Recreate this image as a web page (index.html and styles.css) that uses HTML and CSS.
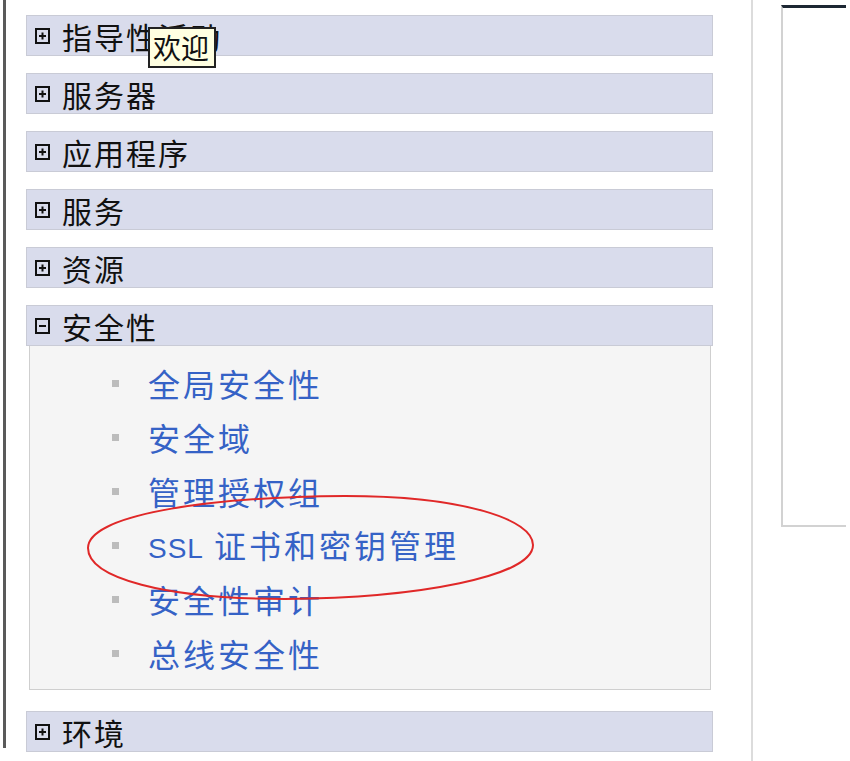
FILE: index.html
```html
<!DOCTYPE html>
<html lang="zh">
<head>
<meta charset="utf-8">
<title>导航</title>
<link rel="stylesheet" href="styles.css">
</head>
<body>
<div class="page">
  <div class="frame-edge"></div>
  <nav class="nav">
    <div class="group">
      <div class="head">
        <svg class="tog" viewBox="0 0 15 16" width="15" height="16"><rect x="1" y="1" width="13" height="14" fill="none" stroke="#111" stroke-width="2"/><path d="M4 8h7M7.5 4.5v7" stroke="#111" stroke-width="2"/></svg>
        <span class="label">指导性活动</span>
        <span class="tooltip">欢迎</span>
      </div>
    </div>
    <div class="group">
      <div class="head">
        <svg class="tog" viewBox="0 0 15 16" width="15" height="16"><rect x="1" y="1" width="13" height="14" fill="none" stroke="#111" stroke-width="2"/><path d="M4 8h7M7.5 4.5v7" stroke="#111" stroke-width="2"/></svg>
        <span class="label">服务器</span>
      </div>
    </div>
    <div class="group">
      <div class="head">
        <svg class="tog" viewBox="0 0 15 16" width="15" height="16"><rect x="1" y="1" width="13" height="14" fill="none" stroke="#111" stroke-width="2"/><path d="M4 8h7M7.5 4.5v7" stroke="#111" stroke-width="2"/></svg>
        <span class="label">应用程序</span>
      </div>
    </div>
    <div class="group">
      <div class="head">
        <svg class="tog" viewBox="0 0 15 16" width="15" height="16"><rect x="1" y="1" width="13" height="14" fill="none" stroke="#111" stroke-width="2"/><path d="M4 8h7M7.5 4.5v7" stroke="#111" stroke-width="2"/></svg>
        <span class="label">服务</span>
      </div>
    </div>
    <div class="group">
      <div class="head">
        <svg class="tog" viewBox="0 0 15 16" width="15" height="16"><rect x="1" y="1" width="13" height="14" fill="none" stroke="#111" stroke-width="2"/><path d="M4 8h7M7.5 4.5v7" stroke="#111" stroke-width="2"/></svg>
        <span class="label">资源</span>
      </div>
    </div>
    <div class="group open">
      <div class="head">
        <svg class="tog" viewBox="0 0 15 16" width="15" height="16"><rect x="1" y="1" width="13" height="14" fill="none" stroke="#111" stroke-width="2"/><path d="M4 8h7" stroke="#111" stroke-width="2"/></svg>
        <span class="label">安全性</span>
      </div>
      <ul class="items">
        <li><span class="bullet"></span><a>全局安全性</a></li>
        <li><span class="bullet"></span><a>安全域</a></li>
        <li><span class="bullet"></span><a>管理授权组</a></li>
        <li><span class="bullet"></span><a><span class="latin">SSL</span> 证书和密钥管理</a></li>
        <li><span class="bullet"></span><a>安全性审计</a></li>
        <li><span class="bullet"></span><a>总线安全性</a></li>
      </ul>
    </div>
    <div class="group">
      <div class="head">
        <svg class="tog" viewBox="0 0 15 16" width="15" height="16"><rect x="1" y="1" width="13" height="14" fill="none" stroke="#111" stroke-width="2"/><path d="M4 8h7M7.5 4.5v7" stroke="#111" stroke-width="2"/></svg>
        <span class="label">环境</span>
      </div>
    </div>
  </nav>
  <div class="divider"></div>
  <div class="content">
    <div class="box"></div>
  </div>
  <svg class="annot" width="850" height="761" viewBox="0 0 850 761">
    <path d="M88 548 C88 516 200 497 345 496 C465 496 533 520 533 545 C533 576 420 598 285 599 C165 599 88 578 88 548 Z" fill="none" stroke="#e02828" stroke-width="2"/>
  </svg>
</div>
</body>
</html>
```

FILE: styles.css
```css
html, body {
  margin: 0;
  padding: 0;
  background: #ffffff;
}

.page {
  position: relative;
  display: flex;
  width: 850px;
  height: 761px;
  overflow: hidden;
  font-family: "Noto Sans CJK SC", "Noto Sans", sans-serif;
}

.frame-edge {
  flex: none;
  width: 3px;
  height: 748px;
  margin-left: 3px;
  background: #5a5a5a;
}

.nav {
  flex: none;
  width: 687px;
  margin-left: 20px;
  padding-top: 15px;
  display: flex;
  flex-direction: column;
  gap: 17px;
}

.group.open {
  margin-bottom: 4px;
}

.head {
  position: relative;
  box-sizing: border-box;
  height: 41px;
  display: flex;
  align-items: center;
  padding-left: 8px;
  background: #d9dcec;
  border: 1px solid #c9cbd6;
}

.tog {
  flex: none;
  margin-right: 12px;
}

.label {
  font-size: 30px;
  letter-spacing: 2px;
  color: #111;
  line-height: 1;
}

.tooltip {
  position: absolute;
  left: 121px;
  top: 11px;
  box-sizing: border-box;
  width: 68px;
  height: 41px;
  padding-left: 3px;
  background: #ffffe1;
  border: 2px solid #222;
  font-size: 28px;
  line-height: 36px;
  color: #111;
  z-index: 2;
}

.items {
  list-style: none;
  margin: 0 2px 0 3px;
  padding: 10px 0 9px 0;
  background: #f5f5f5;
  border: 1px solid #cfcfcf;
  border-top: none;
}

.items li {
  height: 54px;
  display: flex;
  align-items: center;
  padding-left: 82px;
}

.bullet {
  flex: none;
  width: 7px;
  height: 7px;
  background: #bcbcbc;
  margin-right: 29px;
}

.items a {
  color: #3562c6;
  font-size: 32px;
  letter-spacing: 3px;
  line-height: 1;
  white-space: nowrap;
}

.latin {
  font-family: "Liberation Sans", "Noto Sans", sans-serif;
  font-size: 28px;
  letter-spacing: 1px;
}

.divider {
  flex: none;
  width: 2px;
  height: 761px;
  margin-left: 38px;
  background: #dcdcdc;
}

.content {
  flex: 1;
  padding-left: 28px;
  padding-top: 5px;
}

.box {
  box-sizing: border-box;
  width: 65px;
  height: 522px;
  border-top: 3px solid #1d2733;
  border-left: 2px solid #d2d2d2;
  border-bottom: 2px solid #d2d2d2;
}

.annot {
  position: absolute;
  left: 0;
  top: 0;
  pointer-events: none;
}
```
